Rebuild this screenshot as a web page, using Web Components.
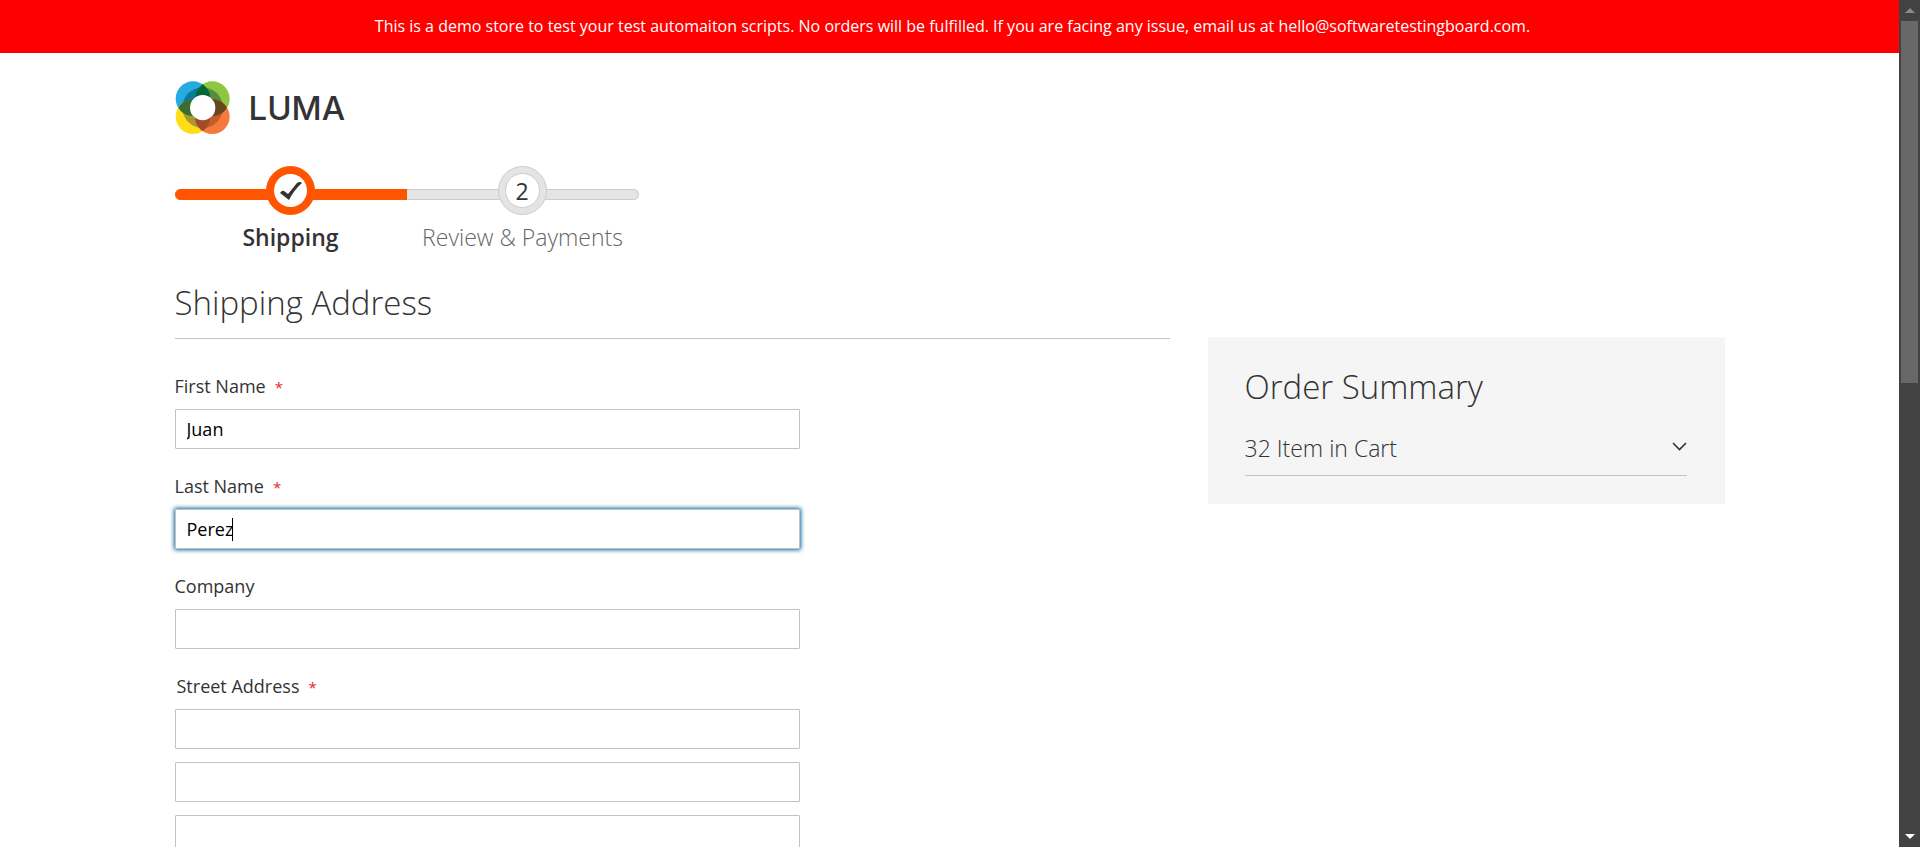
<!DOCTYPE html>
<html lang="en">
<head>
<meta charset="utf-8">
<title>Checkout</title>
<style>
  html, body { margin: 0; height: 100%; background: #fff; }
  body { font-family: "Open Sans", "Noto Sans", sans-serif; color: #333; }
</style>
</head>
<body>
<luma-shell>
  <luma-notice>This is a demo store to test your test automaiton scripts. No orders will be fulfilled. If you are facing any issue, email us at hello@softwaretestingboard.com.</luma-notice>
  <luma-checkout></luma-checkout>
</luma-shell>

<script>
function define(name, html, setup) {
  const template = document.createElement('template');
  template.innerHTML = html;
  customElements.define(name, class extends HTMLElement {
    constructor() {
      super();
      this.attachShadow({ mode: 'open' }).append(template.content.cloneNode(true));
    }
    connectedCallback() {
      if (setup) setup(this, this.shadowRoot);
    }
  });
}

define('luma-scrollbar', `
<style>
  :host { display: flex; flex-direction: column; background: #424242; }
  .end { height: 21px; flex: none; display: flex; align-items: center; justify-content: center; }
  .track { flex: 1; padding: 0 2px; }
  .thumb { height: 45%; background: #686868; }
  svg { display: block; }
</style>
<div class="end"><svg width="10" height="5" viewBox="0 0 10 5" fill="#8b8b8b"><path d="M0 5 5 0l5 5z"/></svg></div>
<div class="track"><div class="thumb"></div></div>
<div class="end"><svg width="10" height="5" viewBox="0 0 10 5" fill="#fff"><path d="M0 0h10L5 5z"/></svg></div>
`);

define('luma-shell', `
<style>
  :host { display: grid; grid-template-columns: minmax(0, 1fr) 21px; height: 100vh; }
  main { overflow-y: auto; scrollbar-width: none; }
</style>
<main><slot></slot></main>
<luma-scrollbar aria-hidden="true"></luma-scrollbar>
`);

define('luma-notice', `
<style>
  :host { display: block; padding: 15px 25px 16px 31px; background: #f00; color: #fff;
          font-size: 16px; line-height: 22px; text-align: center; }
</style>
<slot></slot>
`);

define('luma-logo', `
<style>
  :host { display: flex; }
  a { display: flex; align-items: center; gap: 18px; color: #333; text-decoration: none;
      font: 500 33px/54px Inter, sans-serif; }
  svg { display: block; }
</style>
<a href="#">
  <svg width="56" height="54" viewBox="46 62 168 162" aria-hidden="true">
    <defs>
      <clipPath id="b"><circle cx="100" cy="115" r="52"/></clipPath>
      <clipPath id="g"><circle cx="158" cy="115" r="52"/></clipPath>
      <clipPath id="y"><circle cx="100" cy="169" r="52"/></clipPath>
      <clipPath id="o"><circle cx="158" cy="169" r="52"/></clipPath>
    </defs>
    <circle cx="100" cy="115" r="52" fill="#27a9e1"/>
    <circle cx="158" cy="115" r="52" fill="#8dc63f"/>
    <circle cx="100" cy="169" r="52" fill="#ffde17"/>
    <circle cx="158" cy="169" r="52" fill="#f47b3d"/>
    <circle cx="129" cy="142" r="61" fill="#067a9f" clip-path="url(#b)"/>
    <circle cx="129" cy="142" r="61" fill="#598b3f" clip-path="url(#g)"/>
    <circle cx="129" cy="142" r="61" fill="#a99731" clip-path="url(#y)"/>
    <circle cx="129" cy="142" r="61" fill="#c65c2c" clip-path="url(#o)"/>
    <g clip-path="url(#b)">
      <circle cx="158" cy="115" r="52" fill="#006838"/>
      <circle cx="100" cy="169" r="52" fill="#3b6c32"/>
    </g>
    <g clip-path="url(#o)">
      <circle cx="158" cy="115" r="52" fill="#66471f"/>
      <circle cx="100" cy="169" r="52" fill="#a14a24"/>
    </g>
    <circle cx="129" cy="142" r="38" fill="#fff"/>
  </svg>
  <span>LUMA</span>
</a>
`);

define('luma-step', `
<style>
  :host { display: flex; flex: 1; flex-direction: column; align-items: center; color: #666;
          font-size: 23px; line-height: 30px; font-weight: 300; }
  .rail { align-self: stretch; height: 49px; margin-bottom: 7px; display: flex; align-items: center; justify-content: center; }
  .bar { flex: 1; height: 9px; margin-top: 8px; background: #e4e4e4; border: solid #ccc; border-width: 1px 0; }
  .bar:first-child { margin-right: -2px; }
  .bar:last-child { margin-left: -2px; border-right-width: 1px; border-radius: 0 6px 6px 0; }
  .dot { box-sizing: border-box; z-index: 1; width: 49px; height: 49px; padding: 6px; border: 1px solid #ccc; border-radius: 50%; background: #e4e4e4; }
  .face { box-sizing: border-box; height: 35px; border: 1px solid #ccc; border-radius: 50%; background: #fff;
          display: flex; align-items: center; justify-content: center; color: #333; font-weight: 500; line-height: 30px; }
  .face svg { display: none; }
  :host([complete]) { color: #333; font-weight: 600; }
  :host([complete]) .bar { background: #ff5501; border-color: #ff5501; }
  :host([complete]) .bar:first-child { border-radius: 6px 0 0 6px; }
  :host([complete]) .bar:last-child { border-radius: 0; border-right-width: 0; }
  :host([complete]) .dot { background: #ff5501; border-color: #ff5501; padding: 7px; }
  :host([complete]) .face { height: 33px; border: 0; }
  :host([complete]) .face svg { display: block; }
  :host([complete]) .face slot { display: none; }
</style>
<div class="rail"><div class="bar"></div><div class="dot"><div class="face">
  <slot name="number"></slot>
  <svg width="22" height="18" viewBox="0 0 22 18" aria-hidden="true"><path d="M0 11q2-3 4-2l4 3L17 1q3-2 5 0Q14 8 9 18z" fill="#333"/></svg>
</div></div><div class="bar"></div></div>
<slot></slot>
`);

define('luma-field', `
<style>
  :host { display: block; }
  label, .legend { display: block; font-size: 18px; line-height: 24px; margin-bottom: 11px; }
  .legend { padding-left: 2px; }
  i { font-size: 15px; line-height: 1; font-style: normal; color: #e02b27; margin-left: 9px; }
  .lines { display: grid; gap: 13px; }
  input { box-sizing: border-box; display: block; width: 100%; height: 40px; margin: 0; padding: 0 11px;
          border: 1px solid #c2c2c2; border-radius: 1px; background: #fff; color: #000; outline: 0;
          font: 18px "Open Sans", sans-serif; }
  :host([active]) input { box-shadow: 0 0 4px 1px #00699d;
          background: linear-gradient(#000, #000) 56px 8px / 1px 23px no-repeat #fff; }
</style>
<div class="caption"></div>
<div class="lines"></div>
`, (host, root) => {
  const lines = Number(host.getAttribute('lines') || 1);
  const caption = root.querySelector('.caption');
  const text = document.createElement(lines > 1 ? 'div' : 'label');
  if (lines > 1) {
    text.className = 'legend';
    text.id = 'legend';
    const group = root.querySelector('.lines');
    group.setAttribute('role', 'group');
    group.setAttribute('aria-labelledby', 'legend');
  } else {
    text.htmlFor = 'line0';
  }
  text.textContent = host.getAttribute('label');
  if (host.hasAttribute('required')) {
    const mark = document.createElement('i');
    mark.textContent = '*';
    text.append(mark);
  }
  caption.replaceChildren(text);
  root.querySelector('.lines').replaceChildren(...Array.from({ length: lines }, (_, n) => {
    const input = document.createElement('input');
    input.type = 'text';
    input.id = 'line' + n;
    input.value = n === 0 ? host.getAttribute('value') || '' : '';
    if (lines > 1) input.setAttribute('aria-labelledby', 'legend');
    return input;
  }));
});

define('luma-summary', `
<style>
  :host { display: block; box-sizing: border-box; padding: 27px 38px 28px 37px; background: #f5f5f5; font-weight: 300; }
  h2 { margin: 0 0 14px; font-size: 33px; line-height: 45px; font-weight: 300; }
  button { display: flex; width: 100%; align-items: center; justify-content: space-between; padding: 7px 0 9px;
           border: 0; border-bottom: 1px solid #c2c2c2; background: none; color: #333;
           font: 300 23px/36px "Open Sans", sans-serif; text-align: left; }
  svg { display: block; margin-bottom: 4px; }
</style>
<h2>Order Summary</h2>
<button type="button" aria-expanded="false"><span>32 Item in Cart</span>
  <svg width="15" height="9" viewBox="0 0 15 9" fill="none" stroke="#333" stroke-width="1.6" aria-hidden="true"><path d="M1 1l6.5 6.5L14 1"/></svg>
</button>
`);

define('luma-checkout', `
<style>
  :host { display: block; box-sizing: border-box; max-width: 1600px; margin: 0 auto; padding: 28px 25px 40px; }
  .steps { display: flex; width: 464px; margin: 31px 0 28px; }
  .columns { display: grid; grid-template-columns: 995fr 517fr; column-gap: 38px; align-items: start; }
  h1 { margin: 0 0 35px; padding-bottom: 13px; border-bottom: 1px solid #c2c2c2; font-size: 33px; line-height: 45px; font-weight: 300; }
  form { display: grid; gap: 25px; max-width: 625px; }
  luma-summary { margin-top: 57px; }
</style>
<luma-logo></luma-logo>
<div class="steps">
  <luma-step complete>Shipping</luma-step>
  <luma-step><span slot="number">2</span>Review &amp; Payments</luma-step>
</div>
<div class="columns">
  <section>
    <h1>Shipping Address</h1>
    <form>
      <luma-field label="First Name" value="Juan" required></luma-field>
      <luma-field label="Last Name" value="Perez" required active></luma-field>
      <luma-field label="Company"></luma-field>
      <luma-field label="Street Address" lines="3" required></luma-field>
    </form>
  </section>
  <luma-summary></luma-summary>
</div>
`);
</script>
</body>
</html>
